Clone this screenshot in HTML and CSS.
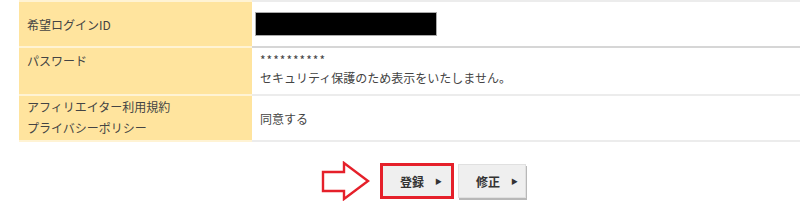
FILE: index.html
```html
<!DOCTYPE html>
<html lang="ja">
<head>
    <meta charset="UTF-8">
    <title>登録内容の確認</title>
    <link rel="stylesheet" href="styles.css">
</head>
<body>
    <table class="confirm">
        <tr class="row-id">
            <th>希望ログインID</th>
            <td><input type="text" class="masked" value="" readonly></td>
        </tr>
        <tr class="row-pass">
            <th>パスワード</th>
            <td>
                <div class="stars">**********</div>
                <div>セキュリティ保護のため表示をいたしません。</div>
            </td>
        </tr>
        <tr class="row-agree">
            <th>アフィリエイター利用規約<br>プライバシーポリシー</th>
            <td>同意する</td>
        </tr>
    </table>

    <div class="actions">
        <svg class="arrow" width="50" height="40" viewBox="0 0 50 40">
            <polygon points="2,11 23,11 23,2 47,20 23,38 23,30 2,30" fill="#fff" stroke="#e5202a" stroke-width="2.4" stroke-linejoin="miter"/>
        </svg>
        <button class="btn btn-submit">登録<span class="tri">&#9654;</span></button>
        <button class="btn btn-fix">修正<span class="tri">&#9654;</span></button>
    </div>
</body>
</html>
```

FILE: styles.css
```css
body {
    margin: 0;
    font-family: "Noto Sans CJK JP", "Noto Sans", sans-serif;
    font-size: 12px;
    color: #444;
    background: #fff;
    overflow: hidden;
}
.confirm {
    margin-left: 19px;
    width: 820px;
    border-collapse: collapse;
}
.confirm th, .confirm td {
    padding: 0 8px;
    text-align: left;
    font-weight: normal;
}
.confirm th {
    width: 217px;
    background: #ffe49e;
    border-top: 2px solid #fff3d4;
    border-bottom: 2px solid #fff3d4;
}
.confirm td {
    border-top: 2px solid #ececec;
    border-bottom: 2px solid #ececec;
}
.row-id th, .row-id td {
    height: 44px;
    vertical-align: middle;
}
.row-id td {
    border-bottom-color: #d6d6d6;
}
.row-pass th, .row-pass td {
    height: 43px;
    vertical-align: top;
    padding-top: 3px;
    line-height: 18px;
}
.row-pass th {
    height: 42px;
    padding-top: 4px;
}
.stars {
    letter-spacing: 1px;
}
.row-agree th {
    height: 44px;
    line-height: 21px;
    vertical-align: top;
}
.row-agree td {
    vertical-align: middle;
}
.masked {
    display: block;
    width: 180px;
    height: 22px;
    margin-left: -5px;
    padding: 0;
    border: 1px solid #aaa;
    background: #000;
}
.actions {
    display: flex;
    align-items: center;
    padding: 19px 0 0 321px;
}
.arrow {
    margin-right: 9px;
}
.btn {
    display: flex;
    align-items: center;
    box-sizing: border-box;
    white-space: nowrap;
    gap: 11px;
    height: 34px;
    padding: 0 0 0 17px;
    margin-right: 4px;
    font-family: "Noto Sans CJK JP", sans-serif;
    font-size: 12px;
    font-weight: bold;
    color: #333;
    background: #efefef;
    border: 1px solid #e0e0e0;
    box-shadow: 1px 2px 0 #b8b8b8;
    cursor: pointer;
}
.btn-submit {
    width: 74px;
    height: 36px;
    border: 3px solid #e5202a;
    box-shadow: none;
}
.btn-fix {
    width: 68px;
}
.tri {
    font-size: 7px;
    font-weight: normal;
}
```
